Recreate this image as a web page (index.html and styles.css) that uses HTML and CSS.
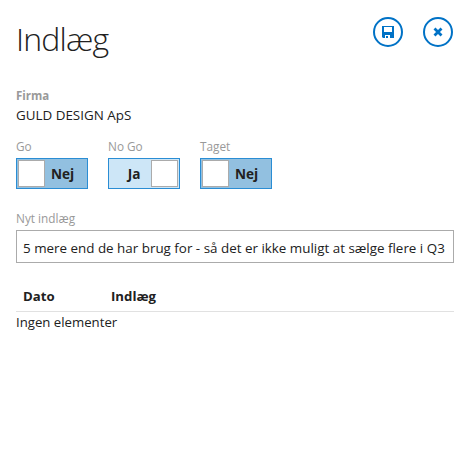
FILE: index.html
```html
<!DOCTYPE html>
<html lang="da">
<head>
<meta charset="utf-8">
<title>Indlæg</title>
<link rel="stylesheet" href="styles.css">
</head>
<body>
  <header class="header">
    <h1>Indlæg</h1>
    <div class="actions">
      <button class="round-btn" type="button" aria-label="Gem">
        <svg width="30" height="30" viewBox="0 0 30 30"><circle cx="15" cy="15" r="14"/><path fill-rule="evenodd" d="M9 9h12v12H10l-1-1zM11 10v5h8v-5zM12 18v3h1v-2h2v2h2v-3z"/></svg>
      </button>
      <button class="round-btn" type="button" aria-label="Luk">
        <svg width="30" height="30" viewBox="0 0 30 30"><circle cx="15" cy="15" r="14"/><path class="cross" d="M11.5 11.5l7 7M18.5 11.5l-7 7"/></svg>
      </button>
    </div>
  </header>

  <div class="company">
    <div class="label label-bold">Firma</div>
    <div class="value">GULD DESIGN ApS</div>
  </div>

  <div class="toggles">
    <div class="field">
      <div class="label">Go</div>
      <div class="toggle"><span class="knob"></span><span class="state">Nej</span></div>
    </div>
    <div class="field">
      <div class="label">No Go</div>
      <div class="toggle on"><span class="state">Ja</span><span class="knob"></span></div>
    </div>
    <div class="field">
      <div class="label">Taget</div>
      <div class="toggle"><span class="knob"></span><span class="state">Nej</span></div>
    </div>
  </div>

  <div class="entry">
    <label class="label" for="entry">Nyt indlæg</label>
    <input id="entry" type="text" value="5 mere end de har brug for - så det er ikke muligt at sælge flere i Q3">
  </div>

  <div class="list">
    <div class="list-head">
      <span>Dato</span>
      <span>Indlæg</span>
    </div>
    <div class="list-empty">Ingen elementer</div>
  </div>
</body>
</html>
```
FILE: styles.css
```css
* {
  box-sizing: border-box;
}

body {
  margin: 0;
  padding: 16px 19px 0 16px;
  background: #fff;
  color: #212121;
  font-family: "Open Sans", "Noto Sans", sans-serif;
  font-size: 13.4px;
  line-height: 18px;
}

.header {
  display: flex;
  justify-content: space-between;
  height: 72px;
}

h1 {
  margin: 0;
  font-size: 32px;
  font-weight: 300;
  line-height: 46px;
  letter-spacing: -0.8px;
}

.actions {
  display: flex;
  gap: 20px;
  padding: 1px 1px 0 0;
}

.round-btn {
  width: 30px;
  height: 30px;
  padding: 0;
  border: 0;
  background: none;
}

.round-btn svg {
  display: block;
  fill: #0072c6;
}

.round-btn circle {
  fill: none;
  stroke: #0072c6;
  stroke-width: 2;
}

.round-btn .cross {
  stroke: #0072c6;
  stroke-width: 2.8;
}

.label {
  display: block;
  height: 20px;
  color: #999;
  font-size: 11.8px;
  line-height: 17px;
}

.label-bold {
  height: 18px;
  font-size: 11.5px;
  font-weight: 700;
  line-height: 16px;
}

.company {
  height: 50px;
}

.toggles {
  display: flex;
  gap: 20px;
  height: 72px;
}

.toggle {
  display: flex;
  width: 72px;
  height: 31px;
  padding: 1px;
  border: 1px solid #2a8dd4;
  background: #92c0e0;
}

.toggle.on {
  background: #cde6f7;
}

.knob {
  width: 27px;
  height: 27px;
  border: 1px solid #ababab;
  background: #fff;
}

.state {
  flex: 1;
  padding-right: 6px;
  font-size: 13.6px;
  font-weight: 700;
  line-height: 28px;
  text-align: center;
}

.toggle.on .state {
  padding: 0 0 0 7px;
}

.entry {
  height: 71px;
}

.entry input {
  display: block;
  width: 100%;
  height: 33px;
  padding: 3px 6px 0;
  border: 1px solid #ababab;
  color: #212121;
  font: inherit;
}

.list-head {
  display: grid;
  grid-template-columns: 88px 1fr;
  height: 31px;
  padding: 0 7px;
  border-bottom: 1px solid #e1e1e1;
  font-size: 13.2px;
  font-weight: 700;
  line-height: 30px;
}

.list-empty {
  padding-top: 1px;
  font-size: 13.2px;
}
```
